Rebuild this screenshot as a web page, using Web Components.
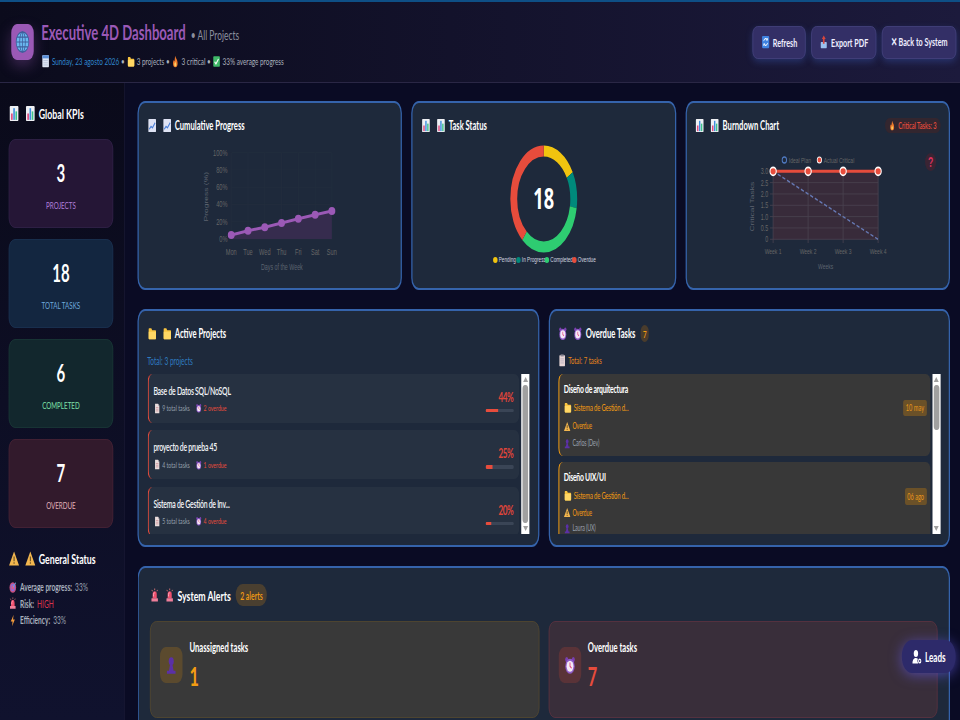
<!DOCTYPE html>
<html lang="en"><head><meta charset="utf-8"><title>Executive 4D Dashboard</title>
<style>
html,body{margin:0;width:960px;height:720px;overflow:hidden;background:#0a0a1f}
body{font-family:Lato,"Open Sans","Noto Sans",sans-serif;color:#fff}
</style></head><body>
<x-app>
  <x-header></x-header>
  <x-sidebar></x-sidebar>
  <x-main></x-main>
</x-app>
<script>
const ICONS={
chart:'<rect x="1.5" y="1" width="13" height="14" rx="1" fill="#eef0f4"/><rect x="3.5" y="8" width="2.4" height="6" fill="#e0457b"/><rect x="6.8" y="3" width="2.4" height="11" fill="#3f8fe0"/><rect x="10.1" y="6" width="2.4" height="8" fill="#3fc48a"/>',
chartup:'<rect x="1.5" y="1" width="13" height="14" rx="1" fill="#dfe3f4"/><path d="M3 12l3-3 2.5 1.500L13 5" fill="none" stroke="#4a7fd8" stroke-width="1.600"/>',
folder:'<path d="M2 3.500q0-1 1-1h3.500l1.500 2h5.500q1 0 1 1V13q0 1-1 1H3q-1 0-1-1z" fill="#f9c440"/><path d="M2 6h12.500V13q0 1-1 1H3q-1 0-1-1z" fill="#ffd764"/>',
alarm:'<circle cx="3.800" cy="3.500" r="2" fill="#7a3fb0"/><circle cx="12.200" cy="3.500" r="2" fill="#7a3fb0"/><circle cx="8" cy="9" r="6" fill="#8e5ac8"/><circle cx="8" cy="9" r="4.400" fill="#f4e9f6"/><path d="M8 6v3l2 1.500" stroke="#e0457b" stroke-width="1.100" fill="none"/>',
warning:'<path d="M8 1.500L15.500 14.500H.5z" fill="#f3b74f"/><path d="M8 6v4.500M8 11.600v1.300" stroke="#4a3a20" stroke-width="1.400"/>',
siren:'<path d="M4.500 11V7a3.500 3.500 0 017 0v4z" fill="#f0506e"/><path d="M6 9V7a2 2 0 012-2" stroke="#ffc0cc" stroke-width="1" fill="none"/><rect x="2.500" y="11" width="11" height="3.500" rx=".5" fill="#ef7f9a"/><path d="M8 .5v1.800M3.200 2l1 1.500M12.800 2l-1 1.500" stroke="#f08080" stroke-width="1"/>',
bolt:'<path d="M9.500 1L4 9.200h3.500L6.500 15 12 6.800H8.500z" fill="#f39c3c"/>',
target:'<circle cx="8" cy="8" r="6.500" fill="#c7507d"/><circle cx="8" cy="8" r="4.500" fill="#8e6ad8"/><circle cx="8" cy="8" r="2.500" fill="#e7567c"/><path d="M8 8l6-6" stroke="#5fb2e8" stroke-width="1.300"/>',
person:'<circle cx="8" cy="5" r="3.200" fill="#5b30a6"/><path d="M6.500 7.500h3L11 12.500H13.500V15H2.500V12.500H5z" fill="#5b30a6"/>',
doc:'<path d="M3 1h7l3 3v11H3z" fill="#e9dcdc"/><path d="M10 1l3 3h-3z" fill="#a9a0a6"/><path d="M5 6.500h6M5 9h6M5 11.500h6" stroke="#c7757f" stroke-width="1"/>',
clip:'<rect x="2.500" y="1.500" width="11" height="13.500" rx="1" fill="#e8d6d6"/><rect x="5" y=".5" width="6" height="2.500" fill="#8b8894"/><path d="M4.500 6h7M4.500 8.500h7M4.500 11h7" stroke="#a8a4b4" stroke-width="1"/>',
calendar:'<rect x="2" y="1.500" width="12" height="13.500" rx="1" fill="#dfe6f4"/><rect x="2" y="1.500" width="12" height="3.500" fill="#5a8fd8"/><path d="M4 7.500h8M4 10h8M4 12.500h8" stroke="#a8b4cc" stroke-width=".9"/>',
flame:'<path d="M8 1c.5 3 4.500 4.500 4.500 9a4.500 5 0 01-9 0c0-2 1-3 1.800-4 .3 1 .7 1.500 1.200 1.700C7 5.500 7 3 8 1z" fill="#ee7a2c"/><path d="M8 8c.3 1.500 2 2.200 2 3.800a2 2.400 0 01-4 0c0-1.500 1.500-2.200 2-3.800z" fill="#fbd065"/>',
check:'<rect x="1.500" y="1.500" width="13" height="13" rx="1.500" fill="#3fb868"/><path d="M4.200 8.300l2.600 2.700 5-6" stroke="#fff" stroke-width="1.900" fill="none"/>',
refresh:'<rect x="1.500" y="1" width="13" height="14" rx="1.500" fill="#3f82e0"/><path d="M4.500 7a3.500 3.500 0 016.200-1.500M11.500 9a3.500 3.500 0 01-6.200 1.500" stroke="#fff" stroke-width="1.200" fill="none"/><path d="M11.500 3.500v2.500H9M4.500 12.500V10H7" stroke="#fff" stroke-width="1" fill="none"/>',
exp:'<rect x="2.500" y="8" width="11" height="7" rx="1" fill="#9bc1ee"/><path d="M8 .5l3.500 4H9.500V10h-3V4.500H4.500z" fill="#d9463c"/>',
globe:'<circle cx="8" cy="8" r="6.800" fill="#6ab8f0"/><g fill="none" stroke="#3f5f9c" stroke-width=".8"><circle cx="8" cy="8" r="6.800"/><ellipse cx="8" cy="8" rx="3" ry="6.800"/><path d="M8 1.200v13.600M1.200 8h13.600M2.200 4.700h11.600M2.200 11.300h11.600"/></g>',
usercog:'<circle cx="6.500" cy="4.500" r="3.500" fill="#fff"/><path d="M1 14.500c0-4 2.500-5.500 5.500-5.500 1.200 0 2.200.2 3 .7a3.500 3.500 0 00.6 4.800z" fill="#fff"/><circle cx="12.500" cy="12" r="2.600" fill="#fff"/><circle cx="12.500" cy="12" r="1" fill="#2d2a6a"/>'
};
function def(name,css,html,extra){
  const t=document.createElement('template');
  t.innerHTML='<style>'+css+'</style>'+html;
  customElements.define(name,class extends HTMLElement{
    constructor(){super();this.attachShadow({mode:'open'}).appendChild(t.content.cloneNode(true));}
    connectedCallback(){if(extra)extra(this,this.shadowRoot);}
  });
}
const attr=(h,s,a)=>s.querySelectorAll('[data-t]').forEach(n=>{n.textContent=h.getAttribute(n.dataset.t)||''});

customElements.define('x-ico',class extends HTMLElement{
  constructor(){super();this.attachShadow({mode:'open'});}
  connectedCallback(){
    const s=this.getAttribute('s')||15;
    this.shadowRoot.innerHTML='<style>:host{display:inline-flex;flex:none;vertical-align:middle}svg{display:block}</style><svg width="'+s+'" height="'+s+'" viewBox="0 0 16 16">'+ICONS[this.getAttribute('n')]+'</svg>';
  }
});

def('x-title',`:host{display:flex;align-items:center;font-size:var(--ts,14px);font-weight:700;color:#fff;height:20px;white-space:nowrap}
 x-ico+x-ico{margin-left:9px;margin-right:5px}`,
 '<x-ico></x-ico><x-ico></x-ico><slot></slot>',
 (h,s)=>{const n=h.getAttribute('i'),sz=h.getAttribute('s')||17;s.querySelectorAll('x-ico').forEach(i=>{i.setAttribute('n',n);i.setAttribute('s',sz);i.connectedCallback();});});

def('x-btn',`:host{display:inline-flex;align-items:center;justify-content:center;gap:5px;height:33px;width:var(--w);box-sizing:border-box;border-radius:8px;background:#332f66;border:1.5px solid #45427e;box-shadow:0 3px 10px rgba(70,110,220,.3);font-size:11.500px;font-weight:700;color:#eef;white-space:nowrap}`,'<slot></slot>');

def('x-header',`:host{display:flex;align-items:center;justify-content:space-between;box-sizing:border-box;height:83px;padding:0 6px 0 18px;border-top:2px solid #0e4f86;border-bottom:1px solid #2a2745;background:linear-gradient(90deg,#0b0b1c,#1c1a3c)}
 .l{display:flex;align-items:center;gap:12px}
 .logo{width:36px;height:36px;border-radius:9px;background:#9b59b6;display:flex;align-items:center;justify-content:center;box-shadow:0 6px 18px rgba(155,89,182,.35)}
 h1{margin:1px 0 0;font-size:21px;line-height:30px;font-weight:700;color:#9b59b6;white-space:nowrap}
 h1 span{font-size:13.500px;font-weight:400;color:#8b8f9e;margin-left:3px}
 .sub{display:flex;align-items:center;gap:3px;font-size:10.200px;color:#aab1bd;white-space:nowrap;margin-top:4px}
 .d{color:#2f86cc}
 .r{display:flex;gap:9px}`,
 `<div class="l"><div class="logo"><x-ico n="globe" s="24"></x-ico></div><div><h1>Executive 4D Dashboard <span>• All Projects</span></h1>
 <div class="sub"><x-ico n="calendar" s="14"></x-ico><span class="d">Sunday, 23 agosto 2026</span> • <x-ico n="folder" s="13"></x-ico> 3 projects • <x-ico n="flame" s="13"></x-ico> 3 critical • <x-ico n="check" s="13"></x-ico> 33% average progress</div></div></div>
 <div class="r"><x-btn style="--w:85px"><x-ico n="refresh" s="14"></x-ico>Refresh</x-btn><x-btn style="--w:104px"><x-ico n="exp" s="14"></x-ico>Export PDF</x-btn><x-btn style="--w:119px">✕ Back to System</x-btn></div>`);

def('kpi-card',`:host{display:flex;flex-direction:column;align-items:center;box-sizing:border-box;height:89px;border-radius:10px;border:1.5px solid var(--b);background:var(--bg);padding-top:17px}
 .n{font-size:24px;font-weight:700;line-height:32px;color:#fff}
 .l{font-size:10px;line-height:16px;margin-top:8px;color:var(--c);text-transform:uppercase}`,
 '<div class="n" data-t="n"></div><div class="l" data-t="l"></div>',attr);

def('x-stat',`:host{display:flex;align-items:center;gap:5px;height:16.500px;font-size:10.500px;color:#9aa3b2;white-space:nowrap}
 b{font-weight:700;color:#a8b0bd}`,'<x-ico s="13"></x-ico><b data-t="k"></b><span><slot></slot></span>',
 (h,s)=>{attr(h,s);const i=s.querySelector('x-ico');i.setAttribute('n',h.getAttribute('i'));i.connectedCallback();});

def('x-sidebar',`:host{display:block;position:absolute;left:0;top:83px;bottom:0;width:200px;box-sizing:border-box;padding:20px 18px 0 14px;border-right:1.5px solid #1c1c38;background:linear-gradient(#0a0a1a,#10122e)}
 .k{display:flex;flex-direction:column;gap:11px;margin-top:16px}
 .g{margin-top:20px}
 .s{margin-top:11px;display:flex;flex-direction:column}
 .hi{color:#d8344c}`,
 `<x-title i="chart">Global KPIs</x-title>
 <div class="k">
 <kpi-card n="3" l="Projects" style="--bg:#251636;--b:#33224a;--c:#b07fdc"></kpi-card>
 <kpi-card n="18" l="Total Tasks" style="--bg:#132640;--b:#1b3454;--c:#6ea9dc"></kpi-card>
 <kpi-card n="6" l="Completed" style="--bg:#12272d;--b:#1a3a38;--c:#7fe0a8"></kpi-card>
 <kpi-card n="7" l="Overdue" style="--bg:#321a2c;--b:#4a2436;--c:#e0b0b8"></kpi-card>
 </div>
 <x-title class="g" i="warning" s="17">General Status</x-title>
 <div class="s">
 <x-stat i="target" k="Average progress:">33%</x-stat>
 <x-stat i="siren" k="Risk:"><span class="hi">HIGH</span></x-stat>
 <x-stat i="bolt" k="Efficiency:">33%</x-stat>
 </div>`);

def('dash-card',`:host{display:flex;flex-direction:column;box-sizing:border-box;min-width:0;border-radius:12px;border:2px solid #3563ab;background:#1e293b;padding:12.500px 13.500px;overflow:hidden}
 .h{display:flex;align-items:center;justify-content:space-between;height:20px;flex:none}
 .t{display:flex;align-items:center;gap:8px}`,
 '<div class="h"><div class="t"><slot name="title"></slot></div><slot name="aside"></slot></div><slot></slot>');

def('x-bar',`:host{display:flex;flex-direction:column;align-items:center;flex:none;width:13px;background:#fff;padding:3px 2px;box-sizing:border-box}
 i{width:0;height:0;border-left:4px solid transparent;border-right:4px solid transparent}
 .u{border-bottom:5px solid #a0a0a0}.d{border-top:5px solid #a0a0a0}
 .tr{flex:1;width:100%;margin:3px 0}
 .th{width:100%;background:#a0a0a0;border-radius:4px;height:var(--h,100%)}`,
 '<i class="u"></i><div class="tr"><div class="th"></div></div><i class="d"></i>');

def('x-project',`:host{display:flex;justify-content:space-between;align-items:center;box-sizing:border-box;height:49px;flex:none;padding:0 9px 0 8px;border-left:2px solid #e74c3c;border-radius:8px;background:#263141}
 .nm{font-size:11px;letter-spacing:-.4px;font-weight:600;color:#f2f4f7;line-height:17px;margin-top:-1px}
 .m{display:flex;align-items:center;gap:9px;margin-top:4px;font-size:8.300px;color:#98a1ae}
 .m span{display:flex;align-items:center;gap:3px}
 .o{color:#e74c3c}
 .r{display:flex;flex-direction:column;align-items:flex-end;margin-top:3px}
 .p{font-size:13px;letter-spacing:-.8px;font-weight:700;color:#e0453a;line-height:20px;margin-right:1px}
 .b{width:45px;height:3.500px;border-radius:2px;background:#3a4556;margin-top:2px;overflow:hidden}
 .f{height:100%;background:#e74c3c}`,
 `<div><div class="nm" data-t="name"></div><div class="m"><span><x-ico n="doc" s="11"></x-ico><span data-t="total"></span></span><span class="o"><x-ico n="alarm" s="10"></x-ico><span data-t="over"></span></span></div></div>
 <div class="r"><div class="p" data-t="pct"></div><div class="b"><div class="f"></div></div></div>`,
 (h,s)=>{attr(h,s);s.querySelector('.f').style.width=h.getAttribute('pct');});

def('x-task',`:host{display:flex;justify-content:space-between;box-sizing:border-box;flex:none;height:82px;padding:7px 6px 0 7px;border-left:2px solid #f39c12;border-radius:8px;background:#383838;align-items:flex-start}
 .nm{font-size:11px;letter-spacing:-.4px;font-weight:700;color:#fff;line-height:16px}
 .l{display:flex;align-items:center;gap:3px;white-space:nowrap}
 .pj{color:#f39c12;font-size:9.500px;letter-spacing:-.3px;margin-top:2px;line-height:18px}
 .ov{color:#f39c12;font-size:8.500px;letter-spacing:-.2px;line-height:var(--lh,17.500px);margin-top:var(--om,1px)}
 .w{color:#98a1ae;font-size:8.500px;letter-spacing:-.2px;line-height:11px;margin-top:var(--wm,3px)}
 .d{margin-top:19px;font-size:9px;padding:0 4px;height:var(--dh,16px);display:flex;align-items:center;background:#6b5128;color:#e8961a;border-radius:3px}`,
 `<div><div class="nm" data-t="name"></div><div class="l pj"><x-ico n="folder" s="13"></x-ico><span data-t="proj"></span></div><div class="l ov"><x-ico n="warning" s="11"></x-ico>Overdue</div><div class="l w"><x-ico n="person" s="11"></x-ico><span data-t="who"></span></div></div>
 <div class="d" data-t="date"></div>`,attr);

def('x-alert',`:host{display:flex;align-items:center;gap:11px;box-sizing:border-box;height:97px;padding:0 15px 9px;border-radius:10px;border:1.5px solid var(--b);background:var(--bg)}
 .i{width:36px;height:36px;border-radius:9px;background:var(--ib);display:flex;align-items:center;justify-content:center;flex:none}
 .t{font-size:12.300px;font-weight:700;line-height:18px;color:#fff}
 .n{font-size:26px;font-weight:700;line-height:32px;margin-top:3px;color:var(--c)}`,
 '<div class="i"><x-ico s="20"></x-ico></div><div><div class="t" data-t="t"></div><div class="n" data-t="n"></div></div>',
 (h,s)=>{attr(h,s);const i=s.querySelector('x-ico');i.setAttribute('n',h.getAttribute('i'));i.connectedCallback();});

const AX='font-family="Liberation Sans,Arial,sans-serif"';
def('x-progress-chart',`:host{display:block;margin:6.500px -14px 0}svg{display:block}`,
 (()=>{const X=[148,174.8,201.7,228.5,255.3,282.2,309],Y=[93,88.7,85.3,81,76.7,72.7,69];
  const D=['Mon','Tue','Wed','Thu','Fri','Sat','Sun'];
  let o='<svg width="420" height="140" viewBox="0 0 420 140" '+AX+'>';
  for(let i=0;i<6;i++){const y=10.7+i*17.26;o+=`<path d="M148 ${y}H309" stroke="#232e3e"/><text x="142" y="${y+3}" font-size="9" fill="#666" text-anchor="end">${100-i*20}%</text>`;}
  X.forEach((x,i)=>{o+=`<path d="M${x} 10.700V97" stroke="#232e3e"/><text x="${x}" y="113" font-size="9" fill="#666" text-anchor="middle">${D[i]}</text>`;});
  o+=`<path d="M${X.map((x,i)=>x+' '+Y[i]).join('L')}L309 97H148z" fill="#362c4e"/>`;
  o+=`<path d="M${X.map((x,i)=>x+' '+Y[i]).join('L')}" fill="none" stroke="#9b59b6" stroke-width="3"/>`;
  X.forEach((x,i)=>{o+=`<ellipse cx="${x}" cy="${Y[i]}" rx="5.500" ry="4" fill="#9b59b6"/>`;});
  o+=`<text x="229" y="128" font-size="8.500" fill="#5d6470" text-anchor="middle">Days of the Week</text>`;
  o+=`<text transform="translate(110,54.700) rotate(-90)" font-size="8.500" fill="#5d6470" text-anchor="middle">Progress (%)</text>`;
  return o+'</svg>';})());

def('x-status-chart',`:host{display:block;margin:6.500px -14px 0}svg{display:block}`,
 (()=>{let o='<svg width="420" height="140" viewBox="0 0 420 140" '+AX+'>';
  const c=(col,len,off)=>`<circle cx="210" cy="57" r="48" fill="none" stroke="${col}" stroke-width="11" pathLength="18" stroke-dasharray="${len} ${18-len}" stroke-dashoffset="${-off}" transform="rotate(-90 210 57)"/>`;
  o+=c('#f1c40f',3,0)+c('#00897b',2,3)+c('#2ecc71',6,5)+c('#e74c3c',7,11);
  o+=`<text x="210" y="67.500" font-size="29" font-weight="700" fill="#fff" text-anchor="middle" font-family="Open Sans,sans-serif">18</text>`;
  [[132.5,'#f1c40f','Pending'],[169.5,'#00897b','In Progress'],[215,'#2ecc71','Completed'],[259,'#e74c3c','Overdue']].forEach(([x,k,t])=>{
   o+=`<ellipse cx="${x}" cy="118" rx="3.600" ry="3" fill="${k}"/><text x="${x+5.5}" y="120.500" font-size="7.500" fill="#d6dae0">${t}</text>`;});
  return o+'</svg>';})());

def('x-burn-chart',`:host{display:block;margin:6.500px -14px 0}svg{display:block}`,
 (()=>{const X=[139,195,251,307];
  let o='<svg width="420" height="140" viewBox="0 0 420 140" '+AX+'>';
  o+='<rect x="139" y="29.300" width="168" height="68" fill="#382b3a"/>';
  ['3.0','2.5','2.0','1.5','1.0','0.5','0'].forEach((t,i)=>{const y=29.3+i*11.33;o+=`<path d="M134 ${y}H307" stroke="#4a4350"/><text x="131" y="${y+3}" font-size="8.500" fill="#666" text-anchor="end">${t}</text>`;});
  X.forEach((x,i)=>{o+=`<path d="M${x} 29.300V101" stroke="#4a4350"/><text x="${x}" y="112" font-size="8" fill="#666" text-anchor="middle">Week ${i+1}</text>`;});
  o+='<path d="M139 29.300L307 97.300" stroke="#6679b4" stroke-width="1.500" stroke-dasharray="5 3" fill="none"/>';
  o+='<path d="M139 29.300H307" stroke="#e74c3c" stroke-width="3"/>';
  X.forEach(x=>{o+=`<ellipse cx="${x}" cy="29.300" rx="5" ry="4" fill="#e74c3c" stroke="#fff" stroke-width="1.700"/>`;});
  o+='<ellipse cx="157" cy="18" rx="3.500" ry="3" fill="none" stroke="#4f79c0" stroke-width="1.500"/><text x="164" y="21" font-size="8" fill="#666">Ideal Plan</text>';
  o+='<ellipse cx="213" cy="18" rx="3.500" ry="3" fill="#e74c3c" stroke="#fff" stroke-width="1.200"/><text x="220" y="21" font-size="8" fill="#666">Actual Critical</text>';
  o+='<text x="223" y="127" font-size="8" fill="#5d6470" text-anchor="middle">Weeks</text>';
  o+='<text transform="translate(109,64.700) rotate(-90)" font-size="8.500" fill="#5d6470" text-anchor="middle">Critical Tasks</text>';
  o+='<circle cx="391" cy="20" r="9" fill="#3a2433"/><text x="391" y="25" font-size="14" font-weight="700" fill="#d8305c" text-anchor="middle">?</text>';
  return o+'</svg>';})());

def('x-pill',`:host{display:inline-flex;align-items:center;gap:4px;white-space:nowrap;border-radius:12px;background:var(--bg);color:var(--c);font-size:var(--fs,11.500px);font-weight:var(--fw,600);height:var(--ht,16px);padding:0 var(--px,8px)}`,'<slot></slot>');

def('x-main',`:host{display:flex;flex-direction:column;gap:19px;position:absolute;left:200px;right:0;top:83px;bottom:0;padding:18px 16px 0 20px;overflow:hidden;background:#0a0b24}
 .r3{display:grid;grid-template-columns:repeat(3,1fr);gap:15px;flex:none}
 .r2{display:grid;grid-template-columns:repeat(2,1fr);gap:15px;flex:none}
 .r3 dash-card{height:189px}
 .r2 dash-card{height:238px}
 .r3 x-title,.r2 x-title{--ts:12.250px}
 .tot{font-size:10.500px;line-height:20px;margin-top:7px;height:20px;display:flex;align-items:center;gap:3px}
 .list{display:flex;gap:3px;height:160px;margin-top:3px;flex:none}
 .items{flex:1;min-width:0;display:flex;flex-direction:column;gap:7.500px;overflow:hidden}
 .tasks{gap:6px}
 .a{flex:1;min-height:0;padding:17px 18px 0;border-bottom:none;border-radius:12px 12px 0 0}
 .a .grid{display:grid;grid-template-columns:1fr 1fr;gap:15px;margin-top:16px}`,
 `<div class="r3">
  <dash-card><x-title slot="title" s="15" i="chartup">Cumulative Progress</x-title><x-progress-chart></x-progress-chart></dash-card>
  <dash-card><x-title slot="title" s="15" i="chart">Task Status</x-title><x-status-chart></x-status-chart></dash-card>
  <dash-card><x-title slot="title" s="15" i="chart">Burndown Chart</x-title><x-pill slot="aside" style="--bg:#33262f;--c:#e74c3c;--fs:9px;--ht:15px;--px:6px"><x-ico n="flame" s="11"></x-ico>Critical Tasks: 3</x-pill><x-burn-chart></x-burn-chart></dash-card>
 </div>
 <div class="r2">
  <dash-card><x-title slot="title" s="15" i="folder">Active Projects</x-title>
   <div class="tot" style="color:#2f7cc0">Total: 3 projects</div>
   <div class="list"><div class="items">
    <x-project name="Base de Datos SQL/NoSQL" total="9 total tasks" over="2 overdue" pct="44%"></x-project>
    <x-project name="proyecto de prueba 45" total="4 total tasks" over="1 overdue" pct="25%"></x-project>
    <x-project name="Sistema de Gestión de Inv..." total="5 total tasks" over="4 overdue" pct="20%"></x-project>
   </div><x-bar style="--h:100%"></x-bar></div>
  </dash-card>
  <dash-card><x-title slot="title" s="15" i="alarm">Overdue Tasks</x-title><x-pill slot="title" style="--bg:#4a3c2c;--c:#f39c12;--fs:10px;--ht:17px;--px:4px">7</x-pill>
   <div class="tot" style="color:#e8861a;font-size:9.500px"><x-ico n="clip" s="13"></x-ico>Total: 7 tasks</div>
   <div class="list"><div class="items tasks">
    <x-task name="Diseño de arquitectura" proj="Sistema de Gestión d..." who="Carlos (Dev)" date="10 may"></x-task>
    <x-task name="Diseño UIX/UI" proj="Sistema de Gestión d..." who="Laura (UX)" date="06 ago" style="--dh:17px;--lh:16.500px;--wm:1.500px;--om:0px"></x-task>
   </div><x-bar style="--h:33%"></x-bar></div>
  </dash-card>
 </div>
 <dash-card class="a"><x-title slot="title" s="15" i="siren">System Alerts</x-title><x-pill slot="title" style="--bg:#4a3f30;--c:#f39c12;--fs:11px;--ht:22px;--px:7px">2 alerts</x-pill>
  <div class="grid">
   <x-alert t="Unassigned tasks" n="1" i="person" style="--bg:#393939;--b:#55492f;--ib:#5b4a2e;--c:#f39c12"></x-alert>
   <x-alert t="Overdue tasks" n="7" i="alarm" style="--bg:#392e3a;--b:#5e3240;--ib:#5a3338;--c:#e74c3c"></x-alert>
  </div>
 </dash-card>`);

def('x-leads',`:host{position:absolute;left:1443px;top:640px;width:86px;height:33px;box-sizing:border-box;display:flex;align-items:center;justify-content:center;gap:5px;border-radius:16px;background:#2d2a6a;box-shadow:0 2px 16px rgba(100,90,230,.6);font-size:13px;font-weight:700;color:#fff}`,
 '<x-ico n="usercog" s="16"></x-ico>Leads');

def('x-app',`:host{display:block;width:960px;height:720px;overflow:hidden}
 .stage{position:relative;width:1536px;height:720px;overflow:hidden;transform:scaleX(.625);transform-origin:0 0}`,
 '<div class="stage"><slot></slot><x-leads></x-leads></div>');
</script>
</body></html>
